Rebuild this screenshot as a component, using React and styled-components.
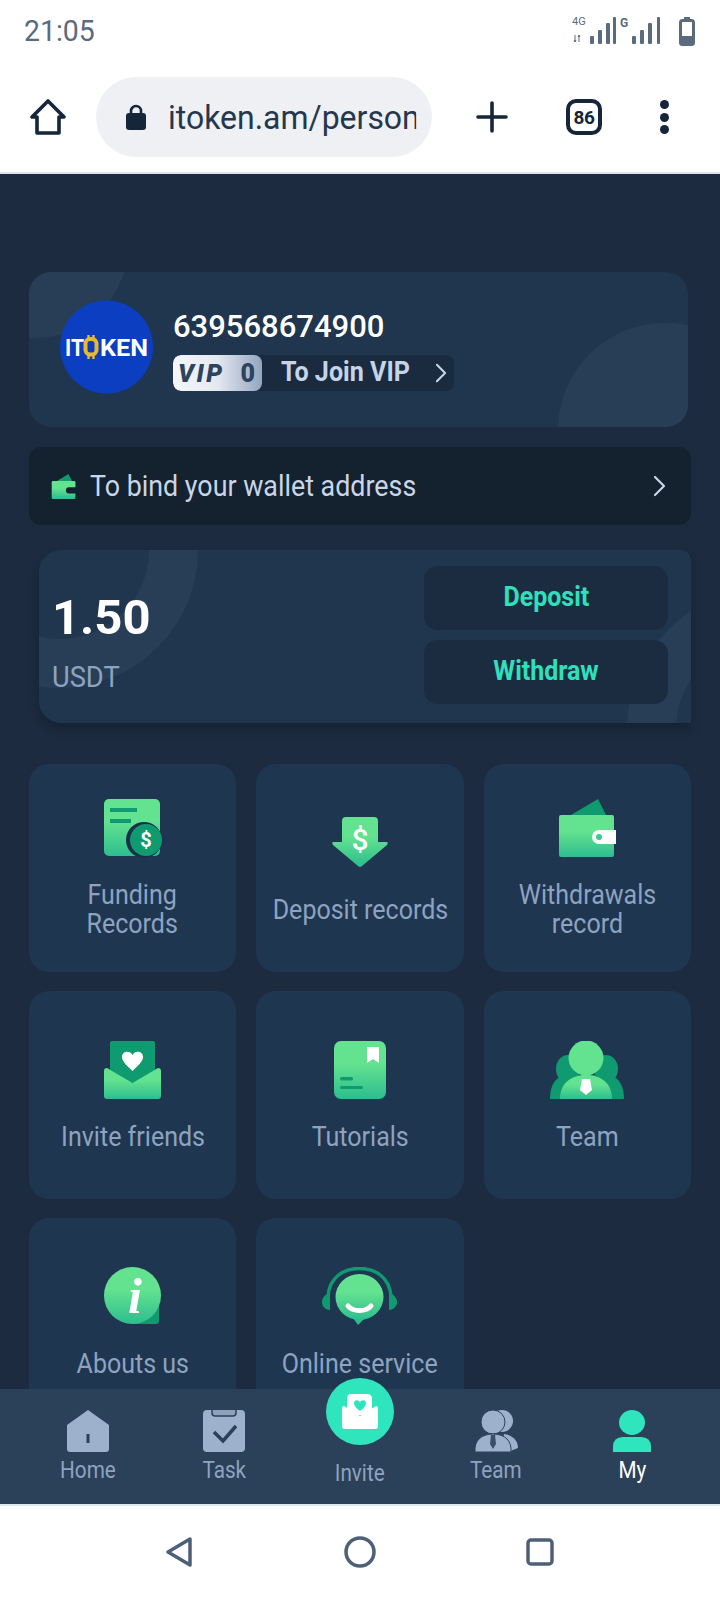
import React from "react";
import styled, { createGlobalStyle } from "styled-components";

const GlobalStyle = createGlobalStyle`
  html, body {
    margin: 0;
    padding: 0;
    background: #ffffff;
  }
  * {
    box-sizing: border-box;
  }
`;

const Phone = styled.div`
  display: flex;
  flex-direction: column;
  width: 720px;
  height: 1600px;
  overflow: hidden;
  font-family: Roboto, "Liberation Sans", sans-serif;
`;

const StatusBar = styled.div`
  display: flex;
  align-items: center;
  justify-content: space-between;
  flex: none;
  height: 60px;
  padding: 2px 24px 0;
  color: #5b6b7e;
`;

const Clock = styled.span`
  font-size: 29px;
  transform: scaleX(0.98);
  transform-origin: left center;
`;

const BrowserBar = styled.div`
  display: flex;
  align-items: center;
  flex: none;
  height: 114px;
  padding: 2px 0 0 30px;
  border-bottom: 2px solid #dde3ea;
  color: #16263a;
`;

const UrlPill = styled.div`
  display: flex;
  align-items: center;
  gap: 21px;
  width: 336px;
  height: 80px;
  margin: 0 44px 0 30px;
  padding: 0 0 0 29px;
  border-radius: 40px;
  background: #eef0f4;
`;

const UrlText = styled.span`
  flex: none;
  width: 264px;
  overflow: hidden;
  font-size: 34px;
  white-space: nowrap;
  color: #25374d;
  transform: scaleX(0.94);
  transform-origin: left center;
`;

const TabCount = styled.div`
  display: flex;
  align-items: center;
  justify-content: center;
  width: 36px;
  height: 36px;
  margin: 0 58px 0 58px;
  border: 4px solid #16263a;
  border-radius: 10px;
  font-size: 19px;
  font-weight: 700;
  letter-spacing: -0.5px;
`;

const Dots = styled.div`
  display: flex;
  flex-direction: column;
  gap: 3.5px;
`;

const Dot = styled.span`
  width: 9px;
  height: 9px;
  border-radius: 50%;
  background: #16263a;
`;

const Viewport = styled.main`
  flex: 1;
  min-height: 0;
  overflow: hidden;
  padding: 98px 29px 0;
  background: #1c2b3f;
`;

const ProfileCard = styled.section`
  position: relative;
  display: flex;
  gap: 20px;
  width: 659px;
  height: 155px;
  overflow: hidden;
  padding: 28px 31px;
  border-radius: 22px;
  background: #20364f;
`;

const Blob = styled.span`
  position: absolute;
  border-radius: 50%;
  background: #283e57;
`;

const BlobTopLeft = styled(Blob)`
  left: -87px;
  top: -120px;
  width: 186px;
  height: 186px;
`;

const BlobBottomRight = styled(Blob)`
  right: -84px;
  bottom: -110px;
  width: 214px;
  height: 214px;
`;

const Avatar = styled.div`
  position: relative;
  flex: none;
  width: 93px;
  height: 94px;
  line-height: 0;
`;

const ProfileInfo = styled.div`
  position: relative;
  display: flex;
  flex-direction: column;
  gap: 9px;
  padding-top: 8px;
`;

const PhoneNumber = styled.div`
  font-size: 31px;
  font-weight: 500;
  line-height: 38px;
  color: #ffffff;
`;

const VipPill = styled.div`
  display: flex;
  align-items: center;
  width: 281px;
  height: 36px;
  overflow: hidden;
  border-radius: 8px;
  background: #1a2b40;
`;

const VipBadge = styled.div`
  display: flex;
  align-items: center;
  justify-content: space-between;
  flex: none;
  width: 89px;
  height: 36px;
  padding: 0 7px 0 5px;
  border-radius: 8px;
  background: linear-gradient(90deg, #f4f6fa 0%, #e4e9f1 50%, #93a5c0 100%);
  color: #2d435e;
  font-weight: 900;
`;

const VipWord = styled.span`
  font-size: 25px;
  font-style: italic;
  letter-spacing: 2.5px;
`;

const VipLevel = styled.span`
  font-size: 25px;
`;

const VipLink = styled.span`
  flex: none;
  margin: 0 15px 3px 19px;
  font-size: 27px;
  font-weight: 700;
  color: #c6d4e8;
  white-space: nowrap;
  transform: scaleX(0.93);
  transform-origin: left center;
`;

const WalletBar = styled.div`
  display: flex;
  align-items: center;
  gap: 13px;
  height: 78px;
  margin: 20px 0 25px;
  padding: 0 25px 0 22px;
  border-radius: 12px;
  background: #14212f;
  color: #c9d6e8;
  font-size: 29px;
`;

const WalletText = styled.span`
  flex: 1;
  transform: scaleX(0.925);
  transform-origin: left center;
`;

const BalanceCard = styled.section`
  position: relative;
  display: flex;
  align-items: flex-start;
  justify-content: space-between;
  width: 652px;
  height: 173px;
  margin-left: 10px;
  padding: 16px 23px 0 13px;
  border-radius: 22px 10px 0 22px;
  background: #20364f;
  box-shadow: 0 6px 10px rgba(8, 16, 26, 0.28);
`;

const RingClip = styled.div`
  position: absolute;
  inset: 0;
  overflow: hidden;
  border-radius: inherit;
`;

const Ring = styled.span`
  position: absolute;
  border-radius: 50%;
  border-style: solid;
  border-color: #283e57;
`;

const RingLeft = styled(Ring)`
  left: -117px;
  top: -138px;
  width: 276px;
  height: 276px;
  border-width: 49px;
`;

const RingRight = styled(Ring)`
  left: 588px;
  top: 37px;
  width: 286px;
  height: 286px;
  border-width: 49px;
`;

const Balance = styled.div`
  position: relative;
  padding-top: 26px;
`;

const Amount = styled.div`
  font-size: 49px;
  font-weight: 700;
  line-height: 52px;
  color: #ffffff;
`;

const Currency = styled.div`
  margin-top: 17px;
  font-size: 29px;
  line-height: 32px;
  color: #8ea3c0;
  transform: scaleX(0.94);
  transform-origin: left center;
`;

const Actions = styled.div`
  position: relative;
  display: flex;
  flex-direction: column;
  gap: 10px;
  width: 244px;
`;

const ActionButton = styled.button`
  height: 64px;
  border: 0;
  border-radius: 14px;
  padding: 0 0 2px;
  background: #1b2b40;
  color: #2ee0bb;
  font-family: inherit;
  font-size: 27px;
  font-weight: 700;
`;

const ActionText = styled.span`
  display: inline-block;
  transform: scaleX(0.925);
`;

const MenuGrid = styled.div`
  display: grid;
  grid-template-columns: repeat(3, 1fr);
  column-gap: 20px;
  row-gap: 19px;
  margin-top: 41px;
`;

const MenuCard = styled.div`
  display: flex;
  flex-direction: column;
  align-items: center;
  justify-content: center;
  gap: 22px;
  height: 208px;
  border-radius: 20px;
  background: #1f3650;
`;

const MenuIcon = styled.div`
  display: flex;
  align-items: center;
  justify-content: center;
  height: 60px;
  line-height: 0;
`;

const MenuLabel = styled.div`
  font-size: 27.5px;
  line-height: 29px;
  text-align: center;
  white-space: pre-line;
  color: #8ea3c0;
  transform: scaleX(0.91);
`;

const TabBar = styled.nav`
  position: relative;
  display: grid;
  grid-template-columns: repeat(5, 136px);
  justify-content: center;
  flex: none;
  height: 115px;
  padding-top: 21px;
  background: #2b4059;
`;

const TabItem = styled.div`
  display: flex;
  flex-direction: column;
  align-items: center;
  gap: 4px;
  font-size: 23px;
  line-height: 30px;
  color: ${(p) => (p.$active ? "#ffffff" : "#8ea3c0")};
`;

const TabGlyph = styled.div`
  height: 42px;
  line-height: 0;
`;

const TabLabel = styled.span`
  display: block;
  margin-top: ${(p) => p.$offset || 0}px;
  transform: scaleX(0.9);
`;

const InviteBubble = styled.div`
  position: absolute;
  top: -11px;
  left: 326px;
  display: flex;
  align-items: center;
  justify-content: center;
  width: 68px;
  height: 67px;
  border-radius: 50%;
  background: #2ee5bd;
`;

const SystemNav = styled.div`
  display: flex;
  align-items: center;
  flex: none;
  height: 96px;
  padding: 0 0 2px 165px;
  border-top: 2px solid #dce7f0;
  background: #ffffff;
`;

const SystemSpace = styled.span`
  width: ${(p) => p.$w}px;
`;

const green = "#0f9a6f";

const Grad = ({ id }) => (
  <defs>
    <linearGradient id={id} x1="0" y1="0" x2="0" y2="1">
      <stop offset="0.4" stopColor="#63e28f" />
      <stop offset="1" stopColor="#2dbd8f" />
    </linearGradient>
  </defs>
);

const NetworkIcons = () => (
  <svg width="124" height="30" viewBox="0 0 124 30" fill="#5b6b7e">
    <text x="0" y="9" fontSize="11" fontFamily="Roboto">4G</text>
    <path d="M3 19v7M2 24l1 2 1-2M7 19v7M6 21l1-2 1 2" stroke="#5b6b7e" strokeWidth="1" fill="none" />
    <rect x="18" y="20" width="4" height="8" rx="1" />
    <rect x="26" y="14" width="4" height="14" rx="1" />
    <rect x="34" y="7" width="4" height="21" rx="1" />
    <rect x="41" y="1" width="3" height="27" rx="1" />
    <text x="48" y="11" fontSize="12" fontWeight="700" fontFamily="Roboto">G</text>
    <rect x="60" y="20" width="4" height="8" rx="1" />
    <rect x="68" y="14" width="4" height="14" rx="1" />
    <rect x="76" y="7" width="4" height="21" rx="1" />
    <rect x="85" y="1" width="3" height="27" rx="1" />
    <rect x="108.5" y="4.5" width="13" height="24" rx="2" fill="none" stroke="#5b6b7e" strokeWidth="3" />
    <rect x="112" y="1" width="6" height="3" />
    <rect x="108" y="20" width="14" height="9" rx="2" />
  </svg>
);

const HomeOutline = () => (
  <svg width="36" height="36" viewBox="0 0 36 36" fill="none" stroke="#16263a" strokeWidth="3.6" strokeLinejoin="round">
    <path d="M18 2 2 18h5v16h22V18h5z" />
  </svg>
);

const LockIcon = () => (
  <svg width="22" height="26" viewBox="0 0 22 26" fill="#16263a" style={{ flex: "none" }}>
    <path d="M6 10V7a5 5 0 0 1 10 0v3" fill="none" stroke="#16263a" strokeWidth="2.6" />
    <rect x="1" y="9" width="20" height="17" rx="3" />
  </svg>
);

const PlusIcon = () => (
  <svg width="32" height="32" viewBox="0 0 32 32" stroke="#16263a" strokeWidth="3.6" strokeLinecap="round">
    <path d="M16 2v28M2 16h28" />
  </svg>
);

const Logo = () => (
  <svg width="93" height="94" viewBox="0 0 93 94">
    <circle cx="46.5" cy="47" r="46.5" fill="#0b3ec0" />
    <text x="5" y="55.5" fontSize="24" fontWeight="700" fontFamily="Roboto" fill="#fff" textLength="19" lengthAdjust="spacingAndGlyphs">IT</text>
    <path d="M28.500 35v5M33.500 35v5M28.500 54v5M33.500 54v5" stroke="#e8b92c" strokeWidth="2.4" />
    <rect x="25.5" y="39" width="11" height="15.5" rx="4.5" fill="none" stroke="#e8b92c" strokeWidth="4" />
    <text x="40" y="55.5" fontSize="24" fontWeight="700" fontFamily="Roboto" fill="#fff" textLength="48" lengthAdjust="spacingAndGlyphs">KEN</text>
  </svg>
);

const Chevron = ({ w = 13, h = 22 }) => (
  <svg width={w} height={h} viewBox="0 0 13 22" fill="none" stroke="#c9d6e8" strokeWidth="2.2" strokeLinecap="round" strokeLinejoin="round" style={{ flex: "none" }}>
    <path d="M2 2l9 9-9 9" />
  </svg>
);

const SmallWallet = () => (
  <svg width="26" height="25" viewBox="0 0 57 58">
    <Grad id="gSmallWallet" />
    <path d="M12 16 39 0l8 16z" fill={green} />
    <rect y="16" width="55" height="42" rx="3" fill="url(#gSmallWallet)" />
    <path d="M57 31H40a7 7 0 0 0 0 14h17z" fill="#14212f" />
  </svg>
);

const FundingIcon = () => (
  <svg width="58" height="59" viewBox="0 0 58 59">
    <Grad id="gFunding" />
    <rect width="56" height="57" rx="5" fill="url(#gFunding)" />
    <rect x="6" y="9" width="27" height="4" fill={green} />
    <rect x="6" y="20" width="21" height="4" fill={green} />
    <circle cx="40" cy="41" r="18" fill="#1b3048" />
    <circle cx="42" cy="41" r="16" fill={green} />
    <text x="42" y="48" textAnchor="middle" fontSize="20" fontWeight="700" fontFamily="Roboto" fill="#fff">$</text>
  </svg>
);

const DepositIcon = () => (
  <svg width="56" height="52" viewBox="0 0 56 52">
    <Grad id="gDeposit" />
    <path d="M14 0h28q4 0 4 4v21h8q3 0 1 3L30 49q-2 2-4 0L1 28q-2-3 1-3h8V4q0-4 4-4z" fill="url(#gDeposit)" />
    <text x="28" y="33" textAnchor="middle" fontSize="30" fontWeight="500" fontFamily="Roboto" fill="#fff">$</text>
  </svg>
);

const WalletIcon = () => (
  <svg width="57" height="58" viewBox="0 0 57 58">
    <Grad id="gWallet" />
    <path d="M12 16 39 0l8 16z" fill={green} />
    <rect y="16" width="55" height="42" rx="2" fill="url(#gWallet)" />
    <path d="M57 31H40a7 7 0 0 0 0 14h17z" fill="#fff" />
    <circle cx="40" cy="38" r="3" fill="#3cc98c" />
  </svg>
);

const InviteIcon = () => (
  <svg width="57" height="58" viewBox="0 0 57 58">
    <Grad id="gInvite" />
    <rect x="6" width="45" height="46" rx="2" fill={green} />
    <path d="M28.5 30C22 24 18 20 18 16c0-6 8-7 10.500-2 2.500-5 10.500-4 10.500 2 0 4-4 8-10.500 14z" fill="#fff" />
    <path d="M3 27l25.500 15L54 27q3 0 3 3v25q0 3-3 3H3q-3 0-3-3V30q0-3 3-3z" fill="url(#gInvite)" />
  </svg>
);

const TutorialIcon = () => (
  <svg width="52" height="58" viewBox="0 0 52 58">
    <Grad id="gTutorial" />
    <rect width="52" height="58" rx="7" fill="url(#gTutorial)" />
    <path d="M33 6h12v16l-6-4-6 4z" fill="#fff" />
    <rect x="6" y="36" width="13" height="3.500" rx="1.500" fill={green} />
    <rect x="6" y="45" width="23" height="3" rx="1.500" fill={green} />
  </svg>
);

const TeamIcon = () => (
  <svg width="74" height="58" viewBox="0 0 74 58">
    <Grad id="gTeam" />
    <ellipse cx="18" cy="28" rx="12" ry="14" fill={green} />
    <ellipse cx="56" cy="28" rx="12" ry="14" fill={green} />
    <path d="M0 58c0-14 6-24 18-24h38c12 0 18 10 18 24z" fill={green} />
    <path d="M10 58c0-15 10-24 26-24s26 9 26 24z" fill="url(#gTeam)" />
    <ellipse cx="36" cy="17" rx="17.500" ry="17.500" fill="#63e28f" />
    <path d="M32 38h8l2 11-6 5-6-5z" fill="#fff" />
  </svg>
);

const InfoIcon = () => (
  <svg width="58" height="60" viewBox="0 0 58 60">
    <Grad id="gInfo" />
    <path d="M29 29h26v25q0 3-3 3H29z" fill={green} />
    <circle cx="28.500" cy="28.500" r="28.500" fill="url(#gInfo)" />
    <text x="31" y="46" textAnchor="middle" fontSize="50" fontStyle="italic" fontWeight="700" fontFamily="Liberation Serif" fill="#fff">i</text>
  </svg>
);

const ServiceIcon = () => (
  <svg width="75" height="60" viewBox="0 0 75 60">
    <Grad id="gService" />
    <path d="M6 30C7 10 22 1.500 37.500 1.500S68 10 69 30" fill="none" stroke={green} strokeWidth="3.500" />
    <path d="M8 26C3 27 0 31 0 35s3 8 8 8z" fill={green} />
    <path d="M67 26c5 1 8 5 8 9s-3 8-8 8z" fill={green} />
    <ellipse cx="37.500" cy="30" rx="24" ry="23" fill="url(#gService)" />
    <path d="M31 51h12l-7 7z" fill="#2dbd8f" />
    <path d="M26 39c5 6 18 6 23 0" fill="none" stroke="#fff" strokeWidth="5" strokeLinecap="round" />
  </svg>
);

const tabGrey = "#9db0cc";

const HomeTab = () => (
  <svg width="42" height="42" viewBox="0 0 42 42">
    <path d="M21 0 42 15v24q0 3-3 3H3q-3 0-3-3V15z" fill={tabGrey} />
    <rect x="19.500" y="24" width="3" height="9" fill="#2b4059" />
  </svg>
);

const TaskTab = () => (
  <svg width="42" height="42" viewBox="0 0 42 42">
    <rect width="42" height="42" rx="4" fill={tabGrey} />
    <path d="M9 0v3q0 3 3 3h18q3 0 3-3V0" fill="#8ea0ba" stroke="#2b4059" strokeWidth="1.500" />
    <path d="M11 22l9 9 13-15" fill="none" stroke="#2b4059" strokeWidth="3.500" />
  </svg>
);

const TeamTab = () => (
  <svg width="43" height="42" viewBox="0 0 43 42">
    <ellipse cx="27" cy="11" rx="11" ry="11" fill={tabGrey} />
    <path d="M29 24c8 1 14 6 14 14l-10 4H25z" fill={tabGrey} />
    <ellipse cx="18" cy="12" rx="12" ry="12" fill={tabGrey} stroke="#2b4059" strokeWidth="1" />
    <path d="M0 42c-1-11 6-18 18-18s19 7 18 18z" fill={tabGrey} stroke="#2b4059" strokeWidth="1" />
    <path d="M16 25h4l1 9-3 5-3-5z" fill="#3a5069" />
  </svg>
);

const MyTab = () => (
  <svg width="38" height="42" viewBox="0 0 38 42" fill="#2ee5bd">
    <ellipse cx="19" cy="12.500" rx="13" ry="12.500" />
    <path d="M10 27h18q10 0 10 10v5H0v-5q0-10 10-10z" />
  </svg>
);

const InviteGlyph = () => (
  <svg width="36" height="35" viewBox="0 0 36 35">
    <path d="M9 0h16q5 0 5 5v16H5V5q0-5 4-5z" fill="#fff" />
    <path d="M18 17c-4-3-6-5-6-8 0-3 4-4 6-1 2-3 6-2 6 1 0 3-2 5-6 8z" fill="#2ee5bd" />
    <path d="M2 12l16 10 16-10q2 0 2 2v18q0 3-3 3H3q-3 0-3-3V14q0-2 2-2z" fill="#fff" />
  </svg>
);

const BackIcon = () => (
  <svg width="28" height="32" viewBox="0 0 28 32" fill="none" stroke="#4d6078" strokeWidth="3.500" strokeLinejoin="round">
    <path d="M25 3 3 16l22 13z" />
  </svg>
);

const CircleIcon = () => (
  <svg width="32" height="32" viewBox="0 0 32 32" fill="none" stroke="#4d6078" strokeWidth="3.500">
    <circle cx="16" cy="16" r="14" />
  </svg>
);

const SquareIcon = () => (
  <svg width="28" height="28" viewBox="0 0 28 28" fill="none" stroke="#4d6078" strokeWidth="3.500">
    <rect x="2" y="2" width="24" height="24" rx="3" />
  </svg>
);

const menuItems = [
  { label: "Funding\nRecords", icon: <FundingIcon /> },
  { label: "Deposit records", icon: <DepositIcon /> },
  { label: "Withdrawals\nrecord", icon: <WalletIcon /> },
  { label: "Invite friends", icon: <InviteIcon /> },
  { label: "Tutorials", icon: <TutorialIcon /> },
  { label: "Team", icon: <TeamIcon /> },
  { label: "Abouts us", icon: <InfoIcon /> },
  { label: "Online service", icon: <ServiceIcon /> },
];

export default function App() {
  return (
    <Phone>
      <GlobalStyle />
      <StatusBar>
        <Clock>21:05</Clock>
        <NetworkIcons />
      </StatusBar>

      <BrowserBar>
        <HomeOutline />
        <UrlPill>
          <LockIcon />
          <UrlText>itoken.am/person</UrlText>
        </UrlPill>
        <PlusIcon />
        <TabCount>86</TabCount>
        <Dots>
          <Dot />
          <Dot />
          <Dot />
        </Dots>
      </BrowserBar>

      <Viewport>
        <ProfileCard>
          <BlobTopLeft />
          <BlobBottomRight />
          <Avatar>
            <Logo />
          </Avatar>
          <ProfileInfo>
            <PhoneNumber>639568674900</PhoneNumber>
            <VipPill>
              <VipBadge>
                <VipWord>VIP</VipWord>
                <VipLevel>0</VipLevel>
              </VipBadge>
              <VipLink>To Join VIP</VipLink>
              <Chevron w={12} h={20} />
            </VipPill>
          </ProfileInfo>
        </ProfileCard>

        <WalletBar>
          <SmallWallet />
          <WalletText>To bind your wallet address</WalletText>
          <Chevron />
        </WalletBar>

        <BalanceCard>
          <RingClip>
            <RingLeft />
            <RingRight />
          </RingClip>
          <Balance>
            <Amount>1.50</Amount>
            <Currency>USDT</Currency>
          </Balance>
          <Actions>
            <ActionButton><ActionText>Deposit</ActionText></ActionButton>
            <ActionButton><ActionText>Withdraw</ActionText></ActionButton>
          </Actions>
        </BalanceCard>

        <MenuGrid>
          {menuItems.map((item) => (
            <MenuCard key={item.label}>
              <MenuIcon>{item.icon}</MenuIcon>
              <MenuLabel>{item.label}</MenuLabel>
            </MenuCard>
          ))}
        </MenuGrid>
      </Viewport>

      <TabBar>
        <TabItem>
          <TabGlyph><HomeTab /></TabGlyph>
          <TabLabel>Home</TabLabel>
        </TabItem>
        <TabItem>
          <TabGlyph><TaskTab /></TabGlyph>
          <TabLabel>Task</TabLabel>
        </TabItem>
        <TabItem>
          <TabLabel $offset={49}>Invite</TabLabel>
        </TabItem>
        <TabItem>
          <TabGlyph><TeamTab /></TabGlyph>
          <TabLabel>Team</TabLabel>
        </TabItem>
        <TabItem $active>
          <TabGlyph><MyTab /></TabGlyph>
          <TabLabel>My</TabLabel>
        </TabItem>
        <InviteBubble>
          <InviteGlyph />
        </InviteBubble>
      </TabBar>

      <SystemNav>
        <BackIcon />
        <SystemSpace $w={151} />
        <CircleIcon />
        <SystemSpace $w={150} />
        <SquareIcon />
      </SystemNav>
    </Phone>
  );
}
